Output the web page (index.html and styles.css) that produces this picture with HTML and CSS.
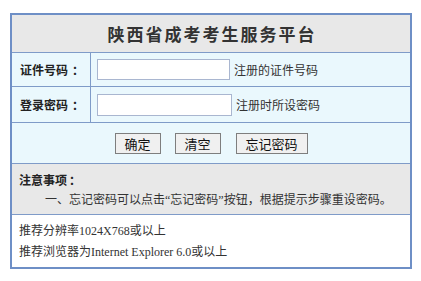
FILE: index.html
```html
<!DOCTYPE html>
<html lang="zh-CN">
<head>
<meta charset="utf-8">
<title>陕西省成考考生服务平台</title>
<link rel="stylesheet" href="styles.css">
</head>
<body>
<div class="panel">
  <div class="header">陕西省成考考生服务平台</div>
  <div class="row row1">
    <div class="label">证件号码<span class="colon">：</span></div>
    <div class="field"><input class="input in1" type="text"><span class="hint">注册的证件号码</span></div>
  </div>
  <div class="row row2">
    <div class="label">登录密码<span class="colon">：</span></div>
    <div class="field"><input class="input in2" type="password"><span class="hint">注册时所设密码</span></div>
  </div>
  <div class="actions">
    <button class="btn btn-short" type="button">确定</button>
    <button class="btn btn-short" type="button">清空</button>
    <button class="btn btn-long" type="button">忘记密码</button>
  </div>
  <div class="notes">
    <div class="notes-title">注意事项<span class="colon-small">：</span></div>
    <div class="notes-item">一、忘记密码可以点击“忘记密码”按钮，根据提示步骤重设密码。</div>
  </div>
  <div class="footer">
    <div class="footer-line">推荐分辨率1024X768或以上</div>
    <div class="footer-line">推荐浏览器为Internet Explorer 6.0或以上</div>
  </div>
</div>
</body>
</html>
```
FILE: styles.css
```css
html, body {
  margin: 0;
  padding: 0;
  background: #ffffff;
}
body {
  font-family: "Liberation Serif", "Noto Sans CJK SC", serif;
  font-size: 12px;
  color: #333333;
}
.panel {
  margin: 13px 0 0 10px;
  width: 402px;
  box-sizing: border-box;
  border: 2px solid #6e8fc6;
  display: flex;
  flex-direction: column;
}
.header {
  height: 37px;
  border-bottom: 1px solid #7f9bc8;
  background: #e8e8e8;
  display: flex;
  align-items: center;
  justify-content: center;
  font-family: "Noto Sans CJK SC", sans-serif;
  font-size: 17px;
  font-weight: bold;
  letter-spacing: 2px;
  color: #333333;
  padding-left: 2px;
}
.row {
  display: grid;
  grid-template-columns: 79px 1fr;
  border-bottom: 1px solid #7f9bc8;
  background: #eaf8fd;
}
.row1 { height: 33px; }
.row2 { height: 35px; }
.label {
  border-right: 1px solid #7f9bc8;
  display: flex;
  align-items: center;
  justify-content: center;
  font-family: "Noto Sans CJK SC", sans-serif;
  font-weight: bold;
  font-size: 12px;
  color: #222222;
  padding-left: 2px;
}
.colon {
  margin-left: 4px;
}
.colon-small {
  margin-left: 2px;
}
.field {
  display: flex;
  align-items: center;
  padding-left: 6px;
}
.input {
  box-sizing: border-box;
  margin: 0;
  padding: 0 2px;
  border: 1px solid #a9b6d0;
  background: #ffffff;
  outline: none;
}
.in1 { width: 133px; height: 21px; }
.in2 { width: 135px; height: 22px; }
.hint {
  margin-left: 4px;
  font-family: "Noto Sans CJK SC", sans-serif;
  font-size: 12px;
  color: #333333;
}
.actions {
  height: 40px;
  border-bottom: 1px solid #7f9bc8;
  background: #eaf8fd;
  display: flex;
  align-items: center;
  justify-content: center;
  gap: 14px;
}
.btn {
  box-sizing: border-box;
  margin: 0;
  padding: 0;
  height: 21px;
  border: 1px solid #7e7e7e;
  background: #f0f0f0;
  font-family: "Noto Sans CJK SC", sans-serif;
  font-size: 13px;
  color: #111111;
  line-height: 19px;
}
.btn-short { width: 46px; }
.btn-long { width: 72px; margin-left: 1px; }
.notes {
  height: 51px;
  box-sizing: border-box;
  border-bottom: 1px solid #7f9bc8;
  background: #e8e8e8;
  padding: 7px 0 0 7px;
  display: flex;
  flex-direction: column;
  gap: 2px;
}
.notes-title {
  font-family: "Noto Sans CJK SC", sans-serif;
  font-weight: bold;
  font-size: 12px;
  line-height: 18px;
  color: #222222;
}
.notes-item {
  padding-left: 26px;
  font-size: 12px;
  line-height: 18px;
  color: #333333;
  white-space: nowrap;
}
.footer {
  height: 52px;
  box-sizing: border-box;
  background: #ffffff;
  padding: 7px 0 0 7px;
  display: flex;
  flex-direction: column;
  gap: 3px;
}
.footer-line {
  font-size: 12px;
  line-height: 18px;
  color: #333333;
}
```
